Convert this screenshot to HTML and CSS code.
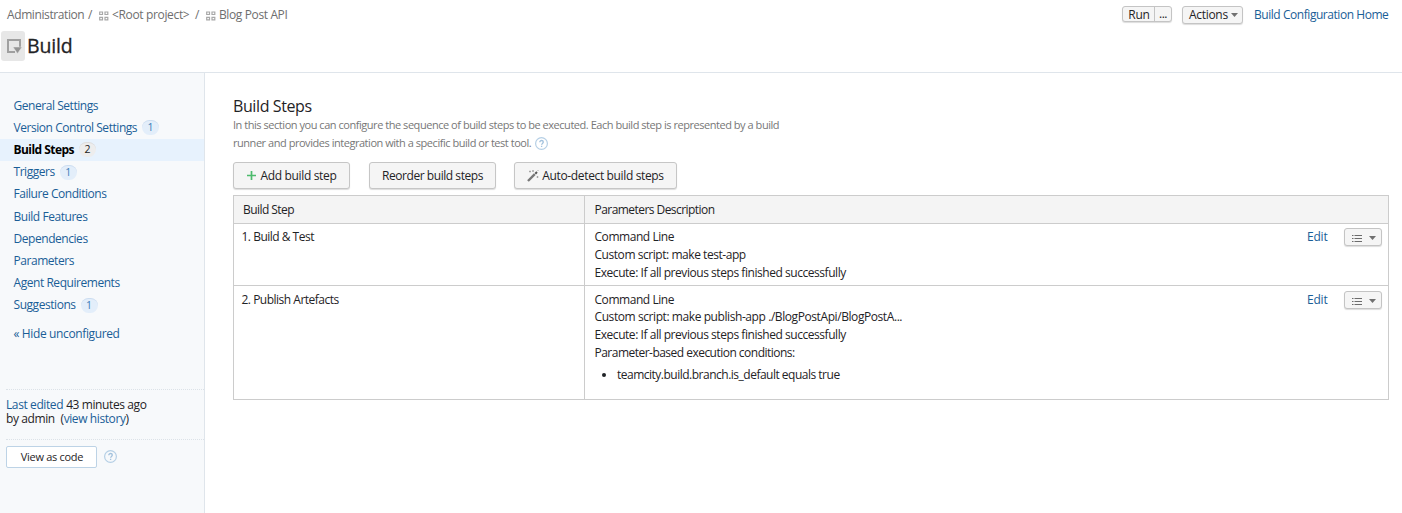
FILE: index.html
```html
<!DOCTYPE html>
<html lang="en">
<head>
<meta charset="utf-8">
<title>Build Steps</title>
<link rel="stylesheet" href="styles.css">
</head>
<body>
<svg class="defs" width="0" height="0">
  <symbol id="project" viewBox="0 0 10 10"><path d="M.7 1h2.800v2.500H.7zM6 1h2.800v2.500H6zM.7 6.300h2.800v2.500H.7zM6 6.300h2.800v2.500H6z" fill="none" stroke="#a8a8a8" stroke-width="1.200"/></symbol>
  <symbol id="help" viewBox="0 0 13 13"><circle cx="6.500" cy="6.500" r="5.900" fill="none" stroke="#b5cfe5" stroke-width="1.200"/><path d="M4.800 5.200c0-2.300 3.500-2.200 3.500-.1 0 1.300-1.700 1.300-1.700 2.700M6.600 8.700v1.200" fill="none" stroke="#a3c2dd" stroke-width="1.300"/></symbol>
  <symbol id="list" viewBox="0 0 10 8"><path d="M0 1.500h1.500M0 4.500h1.500M0 7.500h1.500M2.500 1.500H10M2.500 4.500H10M2.500 7.500H10" stroke="#6c6c6c" stroke-width="1"/></symbol>
  <symbol id="caret" viewBox="0 0 7 4"><path d="M0 0h7L3.500 4z" fill="#707070"/></symbol>
</svg>
<header class="header">
  <nav class="crumbs">
    <span class="c-admin">Administration</span><span class="slash">/</span>
    <svg class="proj first"><use href="#project"/></svg><span class="c-root">&lt;Root project&gt;</span><span class="slash">/</span>
    <svg class="proj second"><use href="#project"/></svg><span class="c-blog">Blog Post API</span>
  </nav>
  <div class="title">
    <span class="title-icon"><svg width="16" height="16" viewBox="0 0 16 16"><path d="M9 14H2V2h12v7" fill="none" stroke="#a0a0a0" stroke-width="2"/><path d="M7 9h9l-4.500 6.500z" fill="#949494" stroke="#e7e7e7" stroke-width=".5"/></svg></span>
    <h1>Build</h1>
  </div>
  <div class="tools">
    <div class="run"><span class="run-main">Run</span><span class="run-more">...</span></div>
    <div class="actions"><span>Actions</span><svg class="caret"><use href="#caret"/></svg></div>
    <a class="home">Build Configuration Home</a>
  </div>
</header>
<div class="body">
  <aside class="sidebar">
    <ul class="menu">
      <li><a>General Settings</a></li>
      <li><a>Version Control Settings</a><span class="badge">1</span></li>
      <li class="active"><a>Build Steps</a><span class="badge">2</span></li>
      <li><a>Triggers</a><span class="badge">1</span></li>
      <li><a>Failure Conditions</a></li>
      <li><a>Build Features</a></li>
      <li><a>Dependencies</a></li>
      <li><a>Parameters</a></li>
      <li><a>Agent Requirements</a></li>
      <li><a>Suggestions</a><span class="badge">1</span></li>
    </ul>
    <a class="hide">« Hide unconfigured</a>
    <div class="edited"><div><a>Last edited</a><span>43 minutes ago</span></div><div><span>by admin&nbsp;</span><span>(<a>view history</a>)</span></div></div>
    <div class="code"><span class="code-btn">View as code</span><svg class="help"><use href="#help"/></svg></div>
  </aside>
  <main class="main">
    <h2>Build Steps</h2>
    <p class="desc">In this section you can configure the sequence of build steps to be executed. Each build step is represented by a build<br>runner and provides integration with a specific build or test tool.<svg class="help"><use href="#help"/></svg></p>
    <div class="buttons">
      <span class="btn b1"><svg width="9" height="9" viewBox="0 0 9 9"><path d="M4.500 0v9M0 4.500h9" stroke="#4dbb6d" stroke-width="1.700"/></svg><span>Add build step</span></span>
      <span class="btn b2"><span>Reorder build steps</span></span>
      <span class="btn b3"><svg width="12" height="12" viewBox="0 0 12 12"><path d="M1 11L7.800 4.200" stroke="#777" stroke-width="2.400"/><path d="M8.300 3.700L10 2" stroke="#555" stroke-width="2"/><path d="M3 .5v2M2 1.500h2M6 0v2M5 1h2M10.500 6v2M9.500 7h2M11 0v1" stroke="#999" stroke-width=".8"/></svg><span>Auto-detect build steps</span></span>
    </div>
    <div class="table">
      <div class="row head"><div class="cell">Build Step</div><div class="cell">Parameters Description</div></div>
      <div class="row r1">
        <div class="cell name">1. Build &amp; Test</div>
        <div class="cell info"><div class="params"><div>Command Line</div><div>Custom script: make test-app</div><div>Execute: If all previous steps finished successfully</div></div><a class="edit">Edit</a><span class="more"><svg class="list"><use href="#list"/></svg><svg class="caret"><use href="#caret"/></svg></span></div>
      </div>
      <div class="row r2">
        <div class="cell name">2. Publish Artefacts</div>
        <div class="cell info"><div class="params"><div>Command Line</div><div class="pub">Custom script: make publish-app ./BlogPostApi/BlogPostA...</div><div>Execute: If all previous steps finished successfully</div><div class="cond">Parameter-based execution conditions:</div><ul><li>teamcity.build.branch.is_default equals true</li></ul></div><a class="edit">Edit</a><span class="more"><svg class="list"><use href="#list"/></svg><svg class="caret"><use href="#caret"/></svg></span></div>
      </div>
    </div>
  </main>
</div>
</body>
</html>
```
FILE: styles.css
```css
* { box-sizing: border-box; }
body { margin: 0; height: 513px; overflow: hidden; background: #fff; color: #1f2326; font: 12px/17.700px "Open Sans", "Noto Sans", sans-serif; letter-spacing: -.45px; display: flex; flex-direction: column; white-space: nowrap; }
.defs { position: absolute; }
svg { display: block; flex: none; }
h1, h2, p, ul { margin: 0; padding: 0; font-weight: 400; }
a { color: #1a5e97; }
.header { height: 73px; border-bottom: 1px solid #dfe5eb; display: grid; grid-template: 30px 32px / 1fr auto; flex: none; }
.crumbs { display: flex; align-items: center; padding-left: 7px; color: #6e6e6e; }
.c-admin { width: 76px; letter-spacing: -.4px; }
.c-root { width: 78px; letter-spacing: -.35px; }
.c-blog { letter-spacing: -.38px; }
.slash { margin-left: 5px; width: 5px; }
.proj { width: 10px; height: 10px; }
.proj.first { margin: 1px 3px 0 6px; }
.proj.second { margin: 1px 3px 0 6px; }
.title { grid-row: 2; display: flex; align-items: center; padding-left: 1px; }
.title-icon { width: 24px; height: 30px; background: #e7e7e7; border-radius: 3px; display: flex; align-items: center; justify-content: center; padding-left: 2px; }
h1 { font: 400 19.500px/30px "Open Sans", sans-serif; letter-spacing: -.15px; margin: -1px 0 0 2px; -webkit-text-stroke: .3px #1f2326; }
.tools { display: flex; align-items: center; padding-right: 13px; }
.run, .actions, .more { border: 1px solid #c4c4c4; border-radius: 3px; background: #f5f5f5; box-shadow: 0 1px 1px #ddd; display: flex; align-items: center; }
.run { width: 50px; height: 16px; margin-top: -2px; line-height: 14px; }
.run-main { width: 32px; height: 14px; border-right: 1px solid #c4c4c4; text-align: center; letter-spacing: -.2px; line-height: 16px; padding-left: 1px; }
.run-more { flex: 1; text-align: center; }
.actions { width: 61px; height: 18px; margin: 0 11px 0 10px; padding-left: 6px; line-height: 16px; gap: 3px; letter-spacing: -.3px; }
.caret { width: 7px; height: 4px; }
.home { width: 135px; }
.body { display: flex; flex: 1; }
.sidebar { width: 205px; background: #f7f9fb; border-right: 1px solid #dfe5eb; padding-top: 21.500px; }
.menu { list-style: none; }
.menu li { height: 22.200px; padding-left: 13.500px; display: flex; align-items: center; }
.menu .active { background: #e7f2fd; font-weight: 700; letter-spacing: -.55px; }
.active a { color: #000; }
.badge { margin: 0 0 0 5px; width: 17px; height: 15px; border-radius: 8px; background: #e3eefa; border-top: 1px solid #ccddf0; color: #3a7ab8; font-size: 10.500px; line-height: 13px; text-align: center; letter-spacing: 0; }
.active .badge { background: #ededed; border-color: #ddd; color: #222; font-weight: 400; }
.hide { display: block; margin: 8.500px 0 0 13.500px; letter-spacing: -.37px; }
.edited { margin: 46px 0 0 6px; border: dotted #dce2e8; border-width: 1px 0; height: 51px; padding-top: 8px; line-height: 14px; letter-spacing: -.4px; }
.edited > div { display: flex; gap: 3px; height: 14px; }
.edited > div > * { display: block; }
.code { display: flex; align-items: center; margin: 6px 0 0 6px; gap: 7px; }
.code-btn { width: 91px; height: 22px; border: 1px solid #bdd3e6; border-radius: 2px; background: #fff; text-align: center; line-height: 20px; font-size: 11px; letter-spacing: -.3px; padding-left: 1px; }
.help { width: 13px; height: 13px; }
.main { padding: 23px 0 0 28px; }
h2 { font-size: 16px; line-height: 21px; letter-spacing: -.4px; }
.desc { font-size: 11px; line-height: 18px; color: #777; height: 36px; margin-top: -1px; letter-spacing: -.46px; }
.desc .help { display: inline-block; vertical-align: -3px; margin-left: 4px; }
.buttons { display: flex; margin: 10px 0 6px; }
.btn { height: 27px; border: 1px solid #c6c6c6; border-radius: 3px; background: #f5f5f5; box-shadow: 0 1px 1px #ddd; display: flex; align-items: center; justify-content: center; }
.b1 { width: 117px; gap: 5px; letter-spacing: -.35px; }
.b2 { width: 127px; margin: 0 18px 0 19px; }
.b3 { width: 163px; gap: 3px; letter-spacing: -.36px; }
.table { width: 1156px; border: 1px solid #ccc; border-top: 0; }
.row { display: grid; grid-template-columns: 351px 1fr; border-top: 1px solid #ccc; }
.cell:first-child { border-right: 1px solid #ccc; padding-left: 9px; }
.cell + .cell { padding-left: 9.500px; }
.head { height: 28px; background: #f4f4f4; line-height: 28px; letter-spacing: -.55px; }
.r1 { height: 62px; }
.r2 { height: 114px; }
.r1 .cell { padding-top: 4.400px; }
.r2 .cell { padding-top: 4.500px; }
.r1 .name, .r2 .name { padding-left: 7.500px; letter-spacing: -.5px; }
.info { display: flex; align-items: flex-start; }
.params { flex: 1; }
.params ul { padding: 5px 0 0 22.500px; letter-spacing: -.5px; }
.pub { letter-spacing: -.42px; }
.cond { letter-spacing: -.52px; }
.edit { width: 21px; margin-right: 16px; letter-spacing: -.2px; }
.more { width: 38px; height: 18px; margin-right: 6px; padding: 3px 0 0 7px; gap: 7px; }
.r1 .more { margin-top: -.9px; }
.list { width: 10px; height: 8px; }
```
